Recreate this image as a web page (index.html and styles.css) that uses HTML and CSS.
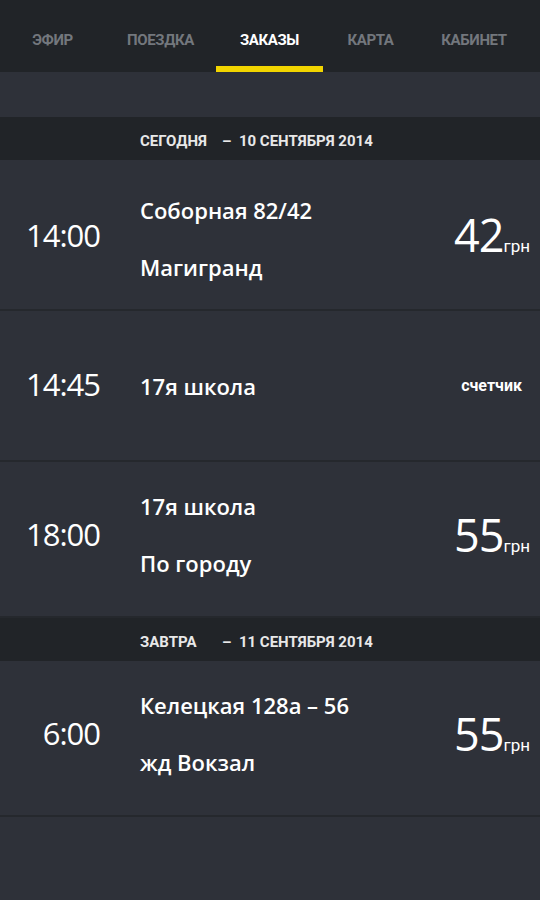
FILE: index.html
```html
<!DOCTYPE html>
<html lang="ru">
<head>
<meta charset="utf-8">
<link rel="stylesheet" href="styles.css">
</head>
<body>
<nav class="tabs">
  <div class="tab">Эфир</div>
  <div class="tab">Поездка</div>
  <div class="tab active">Заказы</div>
  <div class="tab">Карта</div>
  <div class="tab">Кабинет</div>
</nav>
<div class="spacer"></div>
<div class="day"><span class="day-label">Сегодня</span><span class="day-date">–&nbsp;&nbsp;10 сентября 2014</span></div>
<div class="order">
  <div class="time">14:00</div>
  <div class="route"><div>Соборная 82/42</div><div>Магигранд</div></div>
  <div class="price"><span class="sum">42</span><span class="cur">грн</span></div>
</div>
<div class="order single">
  <div class="time">14:45</div>
  <div class="route"><div>17я школа</div></div>
  <div class="price"><span class="meter">счетчик</span></div>
</div>
<div class="order tall">
  <div class="time">18:00</div>
  <div class="route"><div>17я школа</div><div>По городу</div></div>
  <div class="price"><span class="sum">55</span><span class="cur">грн</span></div>
</div>
<div class="day"><span class="day-label">Завтра</span><span class="day-date">–&nbsp;&nbsp;11 сентября 2014</span></div>
<div class="order tall">
  <div class="time">6:00</div>
  <div class="route"><div>Келецкая 128а – 56</div><div>жд Вокзал</div></div>
  <div class="price"><span class="sum">55</span><span class="cur">грн</span></div>
</div>
</body>
</html>
```
FILE: styles.css
```css
html, body {
  margin: 0;
  padding: 0;
  background: #2e3139;
  color: #fff;
  font-family: "Open Sans", sans-serif;
  width: 540px;
  height: 900px;
  overflow: hidden;
}
.tabs {
  display: grid;
  grid-template-columns: 105px 111px 107px 95px 112px;
  height: 72px;
  background: #212428;
}
.tab {
  display: flex;
  align-items: center;
  justify-content: center;
  padding-top: 13px;
  text-transform: uppercase;
  font-family: Roboto, sans-serif;
  font-weight: bold;
  font-size: 15px;
  letter-spacing: -0.4px;
  color: #73777d;
  border-bottom: 6px solid transparent;
}
.tab.active {
  color: #fff;
  border-bottom-color: #f2d500;
}
.spacer {
  height: 45px;
}
.day {
  height: 43px;
  box-sizing: border-box;
  padding-top: 4px;
  background: #212428;
  display: flex;
  align-items: center;
  padding-left: 140px;
  text-transform: uppercase;
  font-family: Roboto, sans-serif;
  font-weight: bold;
  font-size: 15px;
  letter-spacing: 0;
  color: #e8e8e8;
}
.day-label {
  width: 82px;
}
.order {
  display: flex;
  align-items: center;
  height: 151px;
  border-bottom: 2px solid #25282d;
  box-sizing: border-box;
}
.order.tall {
  height: 156px;
  padding-bottom: 10px;
}
.time {
  width: 100px;
  text-align: right;
  font-size: 31px;
  letter-spacing: -1px;
}
.route {
  flex: 1;
  padding-left: 40px;
  padding-top: 8px;
  display: flex;
  flex-direction: column;
  gap: 27px;
  font-weight: 600;
  font-size: 22px;
  line-height: 30px;
}
.single .route,
.tall .route {
  padding-top: 0;
}
.single .time {
  margin-top: -4px;
}
.price {
  padding-right: 10px;
  display: flex;
  align-items: baseline;
}
.sum {
  font-size: 45px;
  letter-spacing: -1px;
}
.cur {
  font-family: Roboto, sans-serif;
  font-size: 17px;
}
.meter {
  font-family: Roboto, sans-serif;
  font-weight: bold;
  font-size: 16px;
  padding-right: 8px;
}
```
